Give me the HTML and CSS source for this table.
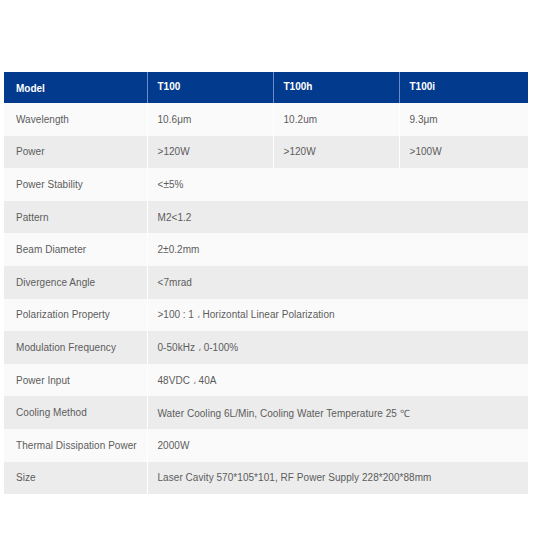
FILE: index.html
```html
<!DOCTYPE html>
<html>
<head>
<meta charset="utf-8">
<link rel="stylesheet" href="styles.css">
</head>
<body>
<table class="spec">
  <colgroup>
    <col class="c1"><col class="c2"><col class="c3"><col class="c4">
  </colgroup>
  <thead>
    <tr><th>Model</th><th class="up">T100</th><th class="up">T100h</th><th class="up">T100i</th></tr>
  </thead>
  <tbody>
    <tr><td>Wavelength</td><td>10.6μm</td><td>10.2um</td><td>9.3μm</td></tr>
    <tr><td>Power</td><td>&gt;120W</td><td>&gt;120W</td><td>&gt;100W</td></tr>
    <tr><td>Power Stability</td><td colspan="3">&lt;±5%</td></tr>
    <tr><td>Pattern</td><td colspan="3">M2&lt;1.2</td></tr>
    <tr><td>Beam Diameter</td><td colspan="3">2±0.2mm</td></tr>
    <tr><td>Divergence Angle</td><td colspan="3">&lt;7mrad</td></tr>
    <tr><td>Polarization Property</td><td colspan="3">&gt;100 : 1 <span class="sep">،</span> Horizontal Linear Polarization</td></tr>
    <tr><td>Modulation Frequency</td><td colspan="3">0-50kHz <span class="sep">،</span> 0-100%</td></tr>
    <tr><td>Power Input</td><td colspan="3">48VDC <span class="sep">،</span> 40A</td></tr>
    <tr><td>Cooling Method</td><td colspan="3">Water Cooling 6L/Min, Cooling Water Temperature 25 ℃</td></tr>
    <tr><td>Thermal Dissipation Power</td><td colspan="3">2000W</td></tr>
    <tr><td>Size</td><td colspan="3">Laser Cavity 570*105*101, RF Power Supply 228*200*88mm</td></tr>
  </tbody>
</table>
</body>
</html>
```
FILE: styles.css
```css
html, body {
  margin: 0;
  padding: 0;
  background: #ffffff;
}
body {
  padding: 72px 5px 0 4px;
  font-family: "Liberation Sans", Arial, sans-serif;
}
.spec {
  width: 524px;
  border-collapse: collapse;
  table-layout: fixed;
  font-size: 10px;
  color: #5c5c5c;
}
.c1 { width: 143px; }
.c2 { width: 126px; }
.c3 { width: 126px; }
.c4 { width: 129px; }
.spec th {
  background: #023a8d;
  color: #fff;
  font-weight: bold;
  text-align: left;
  height: 29px;
  padding: 2px 0 0 10px;
  border-right: 1px solid #6b8cc6;
  vertical-align: middle;
}
.spec th.up {
  padding-top: 0;
  padding-bottom: 2px;
}
.spec th:first-child {
  padding-left: 12px;
}
.spec th:last-child { border-right: none; }
.spec td {
  height: 32.6px;
  padding: 0 0 0 10px;
  border-right: 1px solid #ffffff;
  vertical-align: middle;
  white-space: nowrap;
  letter-spacing: 0.05px;
}
.spec td:first-child {
  padding-left: 12px;
}
.spec td:last-child { border-right: none; }
.spec tbody tr:nth-child(odd) td { background: #fafafa; }
.spec tbody tr:nth-child(even) td { background: #ececec; }
.sep {
  color: #888;
  font-weight: normal;
}
```
